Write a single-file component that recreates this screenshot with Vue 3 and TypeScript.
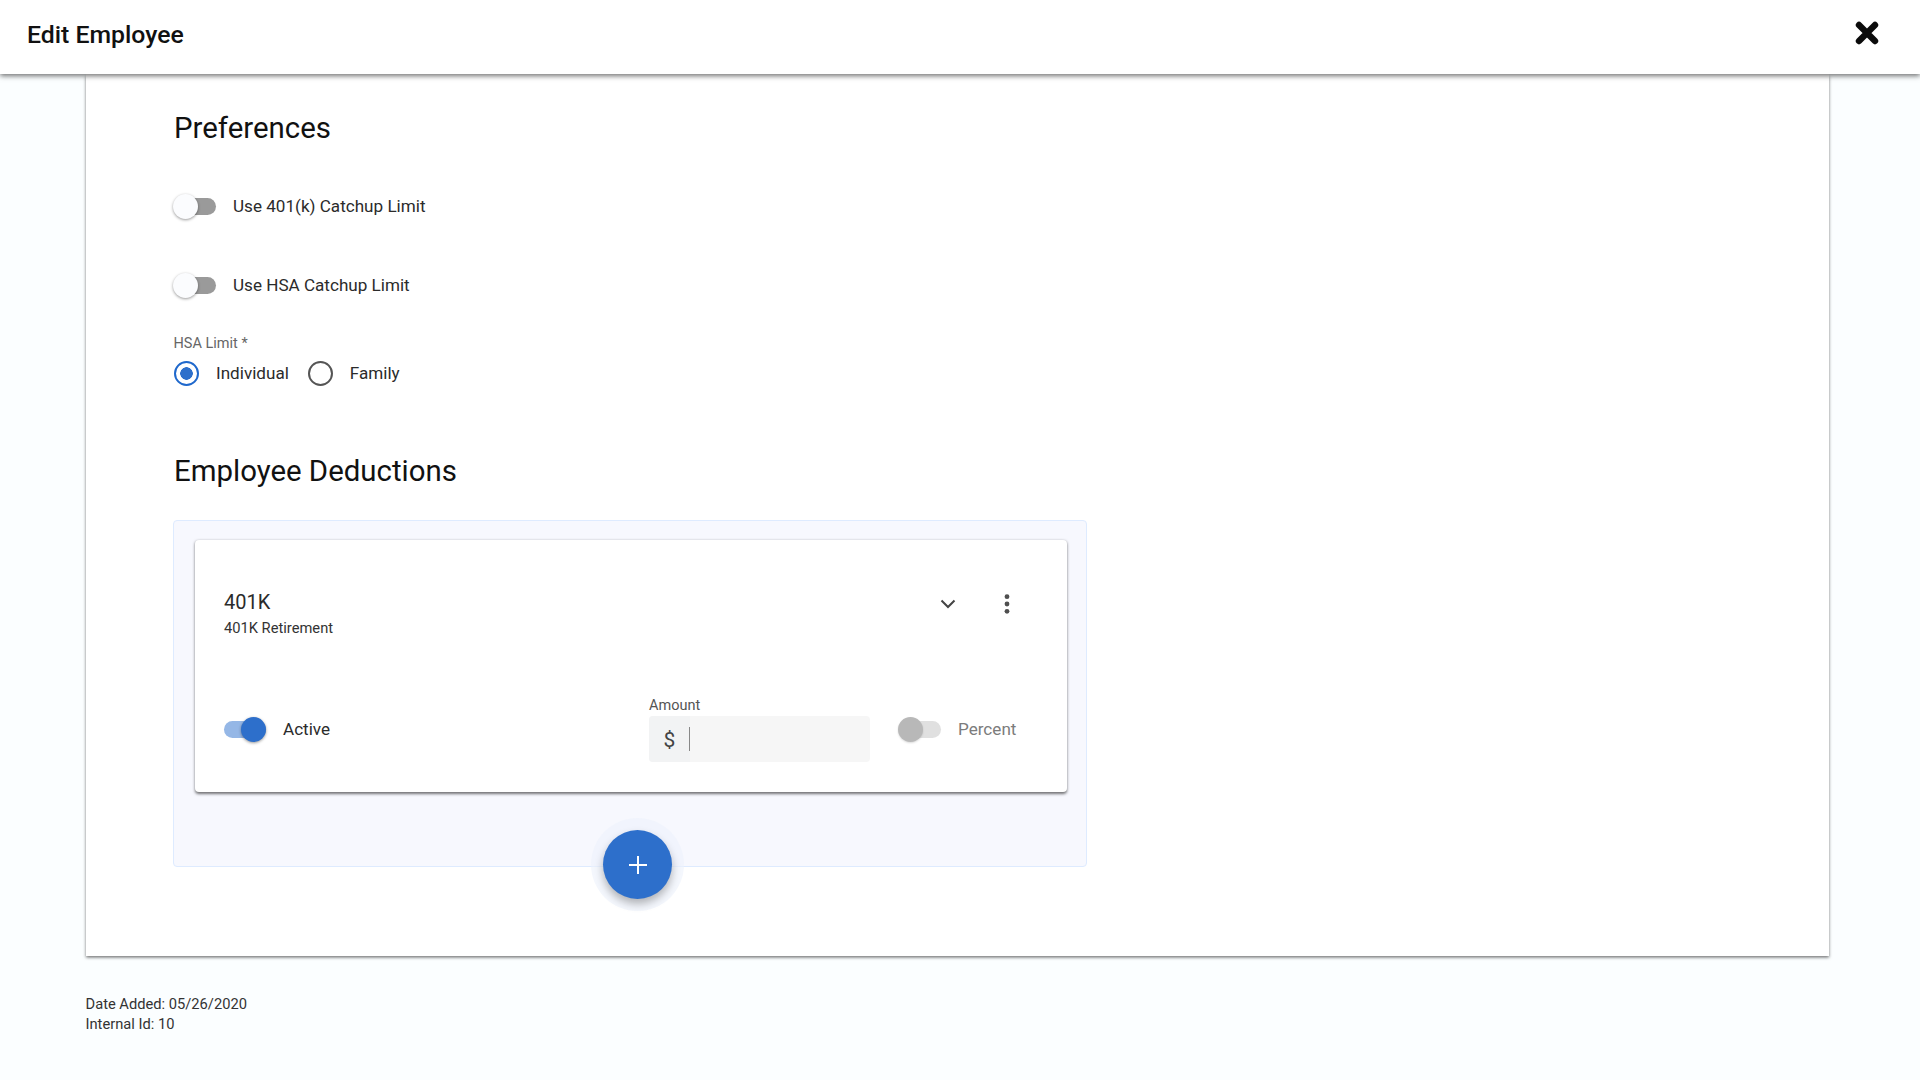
<template>
  <div class="page">
    <header class="top-bar">
      <h1 class="top-title">Edit Employee</h1>
      <button class="close-btn" type="button" aria-label="Close">
        <svg width="24" height="24" viewBox="0 0 24 24">
          <path d="M4 4L20 20M20 4L4 20" fill="none" stroke="#0b0b0b" stroke-width="6.4" stroke-linecap="round" />
        </svg>
      </button>
    </header>

    <main class="content">
      <section class="sheet">
        <h2 class="section-title">Preferences</h2>

        <div class="pref-row first">
          <span class="toggle"><span class="track"></span><span class="knob"></span></span>
          <span class="pref-label">Use 401(k) Catchup Limit</span>
        </div>
        <div class="pref-row second">
          <span class="toggle"><span class="track"></span><span class="knob"></span></span>
          <span class="pref-label">Use HSA Catchup Limit</span>
        </div>

        <div class="field-label hsa-label">HSA Limit *</div>
        <div class="radio-group">
          <label v-for="opt in hsaOptions" :key="opt" class="radio-item">
            <span class="radio" :class="{ checked: opt === hsaLimit }"></span>
            <span class="radio-text">{{ opt }}</span>
          </label>
        </div>

        <h2 class="section-title deductions">Employee Deductions</h2>

        <div class="deduction-panel">
          <div class="deduction-card">
            <div class="card-top">
              <div>
                <div class="deduction-name">401K</div>
                <div class="deduction-desc">401K Retirement</div>
              </div>
              <div class="card-actions">
                <button class="icon-btn" type="button" aria-label="Expand">
                  <svg width="16" height="10" viewBox="0 0 16 10">
                    <path d="M1.5 1.5L8 8L14.5 1.5" fill="none" stroke="#444" stroke-width="2" />
                  </svg>
                </button>
                <button class="icon-btn" type="button" aria-label="More">
                  <svg width="6" height="20" viewBox="0 0 6 20">
                    <circle cx="3" cy="2.7" r="2.4" fill="#4f4f4f" />
                    <circle cx="3" cy="10" r="2.4" fill="#4f4f4f" />
                    <circle cx="3" cy="17.3" r="2.4" fill="#4f4f4f" />
                  </svg>
                </button>
              </div>
            </div>

            <div class="card-bottom">
              <div class="active-group">
                <span class="toggle on"><span class="track"></span><span class="knob"></span></span>
                <span class="pref-label">Active</span>
              </div>
              <div class="amount-field">
                <div class="field-label amount-label">Amount</div>
                <div class="amount-input">
                  <span class="amount-prefix">$</span>
                  <span class="amount-value"><span class="caret"></span></span>
                </div>
              </div>
              <div class="percent-group">
                <span class="toggle disabled"><span class="track"></span><span class="knob"></span></span>
                <span class="pref-label muted">Percent</span>
              </div>
            </div>
          </div>

          <button class="fab" type="button" aria-label="Add deduction">
            <svg width="18" height="18" viewBox="0 0 18 18">
              <path d="M9 0V18M0 9H18" fill="none" stroke="#fff" stroke-width="2" />
            </svg>
          </button>
        </div>
      </section>

      <footer class="meta">
        <div>Date Added: {{ dateAdded }}</div>
        <div>Internal Id: {{ internalId }}</div>
      </footer>
    </main>
  </div>
</template>

<script setup lang="ts">
import { ref } from 'vue'

const hsaOptions: string[] = ['Individual', 'Family']
const hsaLimit = ref('Individual')
const dateAdded = '05/26/2020'
const internalId = 10
</script>

<style>
html,
body {
  margin: 0;
  background: #fbfeff;
}
</style>

<style scoped>
.page {
  min-height: 1080px;
  background: #fbfeff;
  font-family: Roboto, 'Liberation Sans', sans-serif;
  color: #222;
}

.top-bar {
  position: relative;
  z-index: 2;
  height: 74px;
  box-sizing: border-box;
  padding: 0 41px 0 27px;
  display: flex;
  align-items: center;
  justify-content: space-between;
  background: #fff;
  box-shadow: 0 2px 5px rgba(0, 0, 0, 0.55);
}

.top-title {
  margin: 0 0 6px;
  font-size: 24.8px;
  font-weight: 500;
  color: #111;
}

.close-btn {
  display: flex;
  padding: 0;
  border: none;
  background: none;
  cursor: pointer;
  margin-top: -8px;
}

.content {
  padding: 0 91px 0 85.5px;
}

.sheet {
  background: #fff;
  padding: 36px 0 89px 88.5px;
  box-shadow: 0 1.5px 3px rgba(0, 0, 0, 0.55);
}

.section-title {
  margin: 0;
  font-size: 29.4px;
  line-height: 36px;
  font-weight: 400;
  color: #111;
}

.section-title.deductions {
  margin-top: 66.5px;
}

.pref-row {
  display: flex;
  align-items: center;
  gap: 17px;
  height: 32px;
  margin-left: -1px;
}

.pref-row.first {
  margin-top: 44px;
}

.pref-row.second {
  margin-top: 47px;
}

.pref-label {
  margin-top: -1px;
  font-size: 17.1px;
  color: #2b2b2b;
}

.pref-label.muted {
  margin-top: 0;
  color: #7c7c7c;
}

.toggle {
  position: relative;
  flex: none;
  display: block;
  width: 43px;
  height: 25px;
}

.track {
  position: absolute;
  left: 5px;
  right: 0;
  top: 4px;
  height: 17px;
  border-radius: 9px;
  background: #9a9a9a;
}

.knob {
  position: absolute;
  left: 0;
  top: 0;
  width: 25px;
  height: 25px;
  border-radius: 50%;
  background: #fbfcfe;
  box-shadow: 0 1px 3px rgba(0, 0, 0, 0.4);
}

.toggle.on .track {
  left: 0;
  right: 1px;
  background: #95b7e6;
}

.toggle.on .knob {
  left: 17px;
  background: #2d6fcb;
}

.toggle.disabled .track {
  background: #e0e0e0;
}

.toggle.disabled .knob {
  background: #b8b8b8;
  box-shadow: 0 1px 2px rgba(0, 0, 0, 0.15);
}

.field-label {
  font-size: 14.5px;
  line-height: 18px;
  color: #666;
}

.hsa-label {
  margin-top: 34px;
  margin-left: -0.5px;
}

.radio-group {
  display: flex;
  align-items: center;
  gap: 19px;
  margin-top: 8px;
}

.radio-item {
  display: flex;
  align-items: center;
  gap: 17px;
  font-size: 17.1px;
  color: #2b2b2b;
}

.radio-text {
  margin-top: -1px;
}

.radio {
  box-sizing: border-box;
  width: 25px;
  height: 25px;
  border: 2.5px solid #555;
  border-radius: 50%;
}

.radio.checked {
  border-color: #1f68cc;
  background: radial-gradient(circle, #2d6fcb 0 6px, #fff 6.5px);
}

.deduction-panel {
  position: relative;
  box-sizing: border-box;
  width: 914px;
  margin-top: 31.5px;
  margin-left: -1px;
  padding: 19px 19px 74px 21px;
  background: #f7f8fe;
  border: 1px solid #deebff;
  border-radius: 4px;
}

.deduction-card {
  box-sizing: border-box;
  height: 252px;
  padding: 49px 40px 30px 29px;
  display: flex;
  flex-direction: column;
  background: #fff;
  border-radius: 4px;
  box-shadow: 0 1.5px 3px rgba(0, 0, 0, 0.55);
}

.card-top {
  display: flex;
  justify-content: space-between;
  align-items: flex-start;
}

.deduction-name {
  font-size: 20px;
  line-height: 26px;
  color: #2b2b2b;
}

.deduction-desc {
  margin-top: 3px;
  font-size: 14.7px;
  line-height: 20px;
  color: #333;
}

.card-actions {
  display: flex;
  gap: 19px;
}

.icon-btn {
  width: 40px;
  height: 30px;
  padding: 0;
  display: flex;
  align-items: center;
  justify-content: center;
  border: none;
  background: none;
  cursor: pointer;
}

.card-bottom {
  display: flex;
  align-items: center;
  margin-top: auto;
}

.active-group {
  flex: 1;
  display: flex;
  align-items: center;
  gap: 16px;
}

.amount-field {
  width: 221px;
}

.amount-label {
  color: #555;
  position: relative;
  top: 1px;
}

.amount-input {
  display: flex;
  height: 46px;
  margin-top: 2px;
  border-radius: 4px;
  overflow: hidden;
  background: #f6f6f6;
}

.amount-prefix {
  width: 41px;
  padding-top: 2px;
  box-sizing: border-box;
  display: flex;
  align-items: center;
  justify-content: center;
  font-size: 21px;
  color: #444;
  background: #f2f3f4;
}

.amount-value {
  flex: 1;
  display: flex;
  align-items: center;
}

.caret {
  width: 1px;
  height: 24px;
  margin-left: -1px;
  background: #888;
}

.percent-group {
  width: 129px;
  margin-left: 28px;
  display: flex;
  align-items: center;
  gap: 17px;
}

.fab {
  position: absolute;
  left: 429px;
  top: 309px;
  width: 69px;
  height: 69px;
  padding: 0;
  display: flex;
  align-items: center;
  justify-content: center;
  border: none;
  border-radius: 50%;
  background: #2d6fcb;
  cursor: pointer;
  box-shadow: 0 5px 9px rgba(0, 0, 0, 0.28), 0 0 0 12px rgba(236, 242, 252, 0.6);
}

.meta {
  margin-top: 39px;
  font-size: 14.7px;
  line-height: 19.5px;
  color: #333;
}
</style>
